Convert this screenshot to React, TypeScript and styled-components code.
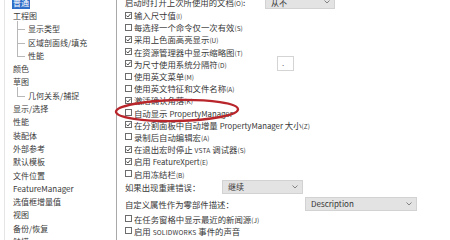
import React from 'react';
import styled, { createGlobalStyle } from 'styled-components';

const Global = createGlobalStyle`
  html, body { margin: 0; padding: 0; background: #fff; }
  body {
    width: 450px; height: 240px; overflow: hidden;
    font-family: "Noto Sans CJK SC", "Noto Sans", sans-serif;
    color: #383838;
  }
`;

const Frame = styled.div`
  position: relative;
  display: flex;
  width: 450px;
  height: 240px;
  overflow: hidden;
  background: #fff;
`;

const Sidebar = styled.div`
  position: relative;
  flex: none;
  width: 116px;
  height: 240px;
  border-right: 1px solid #a9a9a9;
  overflow: hidden;
  &::before {
    content: '';
    position: absolute;
    left: 4px; top: 0; bottom: 0;
    border-left: 1px solid #e6e6e6;
  }
`;

const Tree = styled.ul`
  list-style: none;
  margin: -4px 0 0;
  padding: 0 0 0 12px;
`;

const Item = styled.li<{ $sub?: boolean; $last?: boolean }>`
  position: relative;
  height: 13.3px;
  display: flex;
  align-items: center;
  padding-left: ${p => (p.$sub ? '15px' : '0')};
  font-size: 8px;
  white-space: nowrap;
  color: #3a3a3a;
  ${p =>
    p.$sub &&
    `
    &::before {
      content: '';
      position: absolute;
      left: 5px; top: -2px;
      height: ${p.$last ? 'calc(50% + 2px)' : 'calc(100% + 2px)'};
      border-left: 1px solid #b8b8b8;
    }
    &::after {
      content: '';
      position: absolute;
      left: 5px; top: 50%;
      width: 8px;
      border-top: 1px solid #b8b8b8;
    }
  `}
`;

const Label = styled.span<{ $selected?: boolean }>`
  display: inline-block;
  line-height: 12px;
  padding: 0 1px;
  background: ${p => (p.$selected ? '#2f6fc8' : 'transparent')};
  color: ${p => (p.$selected ? '#fff' : 'inherit')};
`;

const Panel = styled.div`
  flex: 1;
  display: flex;
  flex-direction: column;
  margin-top: -5px;
  padding-left: 8px;
  font-size: 8.4px;
  white-space: nowrap;
`;

const SelectRow = styled.div<{ $gap?: number }>`
  display: flex;
  align-items: center;
  height: 14px;
  margin-top: ${p => p.$gap ?? 0}px;
  flex: none;
`;

const RowLabel = styled.span<{ $width: number }>`
  width: ${p => p.$width}px;
  flex: none;
`;

const Select = styled.div<{ $width: number }>`
  width: ${p => p.$width}px;
  height: 14px;
  box-sizing: border-box;
  display: flex;
  align-items: center;
  justify-content: space-between;
  padding: 0 4px 0 5px;
  background: #e3e3e3;
  border: 1px solid #d2d2d2;
  font-size: 8px;
  color: #333;
  flex: none;
`;

const CheckRow = styled.div<{ $gap?: number }>`
  display: flex;
  align-items: center;
  height: 12.2px;
  margin-top: ${p => p.$gap ?? 0}px;
  flex: none;
`;

const CheckPart = styled.div<{ $width?: number }>`
  display: flex;
  align-items: center;
  gap: 2px;
  ${p => (p.$width ? `width: ${p.$width}px; flex: none;` : '')}
`;

const Box = styled.span`
  width: 7px;
  height: 7px;
  box-sizing: border-box;
  border: 1px solid #6c6c6c;
  background: #fff;
  display: flex;
  align-items: center;
  justify-content: center;
  flex: none;
`;

const Accel = styled.span`
  font-size: 6.5px;
`;

const Small = styled.span`
  font-size: 6.6px;
  letter-spacing: 0.2px;
`;

const Latin = styled.span`
  font-size: 7.8px;
`;

const SepBox = styled.span`
  width: 17px;
  height: 15px;
  box-sizing: border-box;
  border: 1px solid #d4d4d4;
  font-size: 8px;
  padding-left: 4px;
  line-height: 12px;
  color: #666;
`;

const Overlay = styled.svg`
  position: absolute;
  left: 0; top: 0;
  pointer-events: none;
`;

const Chevron = () => (
  <svg width="6" height="4" viewBox="0 0 6 4">
    <polyline points="0.5,0.5 3,3 5.5,0.5" fill="none" stroke="#777" strokeWidth="0.9" />
  </svg>
);

const Check = ({ on }: { on: boolean }) => (
  <Box>
    {on && (
      <svg width="5" height="5" viewBox="0 0 5 5">
        <polyline points="0.4,2.5 1.9,4 4.6,0.8" fill="none" stroke="#333" strokeWidth="0.9" />
      </svg>
    )}
  </Box>
);

type TreeEntry = { text: string; sub?: boolean; last?: boolean; selected?: boolean };

const tree: TreeEntry[] = [
  { text: '普通', selected: true },
  { text: '工程图' },
  { text: '显示类型', sub: true },
  { text: '区域剖面线/填充', sub: true },
  { text: '性能', sub: true, last: true },
  { text: '颜色' },
  { text: '草图' },
  { text: '几何关系/捕捉', sub: true, last: true },
  { text: '显示/选择' },
  { text: '性能' },
  { text: '装配体' },
  { text: '外部参考' },
  { text: '默认模板' },
  { text: '文件位置' },
  { text: 'FeatureManager' },
  { text: '选值框增量值' },
  { text: '视图' },
  { text: '备份/恢复' },
  { text: '触摸' },
];

type CheckEntry = { on: boolean; label: React.ReactNode };

const checksA: CheckEntry[] = [
  { on: true, label: <>输入尺寸值<Accel>(I)</Accel></> },
  { on: false, label: <>每选择一个命令仅一次有效<Accel>(S)</Accel></> },
  { on: true, label: <>采用上色面高亮显示<Accel>(U)</Accel></> },
  { on: true, label: <>在资源管理器中显示缩略图<Accel>(T)</Accel></> },
];

const checksB: CheckEntry[] = [
  { on: false, label: <>使用英文菜单<Accel>(M)</Accel></> },
  { on: false, label: <>使用英文特征和文件名称<Accel>(A)</Accel></> },
  { on: true, label: <>激活确认角落<Accel>(K)</Accel></> },
  { on: false, label: <>自动显示 <Latin>PropertyManager</Latin></> },
  { on: true, label: <>在分割面板中自动增量 <Latin>PropertyManager</Latin> 大小<Accel>(Z)</Accel></> },
  { on: false, label: <>录制后自动编辑宏<Accel>(A)</Accel></> },
  { on: true, label: <>在退出宏时停止 <Small>VSTA</Small> 调试器<Accel>(S)</Accel></> },
  { on: true, label: <>启用 <Latin>FeatureXpert</Latin><Accel>(E)</Accel></> },
  { on: false, label: <>启用冻结栏<Accel>(B)</Accel></> },
];

export default function App() {
  return (
    <Frame>
      <Global />
      <Sidebar>
        <Tree>
          {tree.map((t, i) => (
            <Item key={i} $sub={t.sub} $last={t.last}>
              <Label $selected={t.selected}>{t.text}</Label>
            </Item>
          ))}
        </Tree>
      </Sidebar>
      <Panel>
        <SelectRow>
          <RowLabel $width={140}>启动时打开上次所使用的文档<Accel>(O)</Accel>:</RowLabel>
          <Select $width={70}>从不<Chevron /></Select>
        </SelectRow>
        {checksA.map((c, i) => (
          <CheckRow key={`a${i}`}>
            <CheckPart>
              <Check on={c.on} />
              <span>{c.label}</span>
            </CheckPart>
          </CheckRow>
        ))}
        <CheckRow>
          <CheckPart $width={152}>
            <Check on />
            <span>为尺寸使用系统分隔符<Accel>(D)</Accel></span>
          </CheckPart>
          <SepBox>.</SepBox>
        </CheckRow>
        {checksB.map((c, i) => (
          <CheckRow key={`b${i}`}>
            <CheckPart>
              <Check on={c.on} />
              <span>{c.label}</span>
            </CheckPart>
          </CheckRow>
        ))}
        <SelectRow>
          <RowLabel $width={97}>如果出现重建错误：</RowLabel>
          <Select $width={81}>继续<Chevron /></Select>
        </SelectRow>
        <SelectRow $gap={3}>
          <RowLabel $width={180}>自定义属性作为零部件描述：</RowLabel>
          <Select $width={112}>Description<Chevron /></Select>
        </SelectRow>
        <CheckRow $gap={2}>
          <CheckPart>
            <Check on={false} />
            <span>在任务窗格中显示最近的新闻源<Accel>(J)</Accel></span>
          </CheckPart>
        </CheckRow>
        <CheckRow>
          <CheckPart>
            <Check on={false} />
            <span>启用 <Small>SOLIDWORKS</Small> 事件的声音</span>
          </CheckPart>
        </CheckRow>
      </Panel>
      <Overlay width="450" height="240" viewBox="0 0 450 240">
        <ellipse cx="177" cy="110.5" rx="61" ry="10.5" fill="none" stroke="#b8262c" strokeWidth="2.4" transform="rotate(-1.2 177 110.5)" />
      </Overlay>
    </Frame>
  );
}
